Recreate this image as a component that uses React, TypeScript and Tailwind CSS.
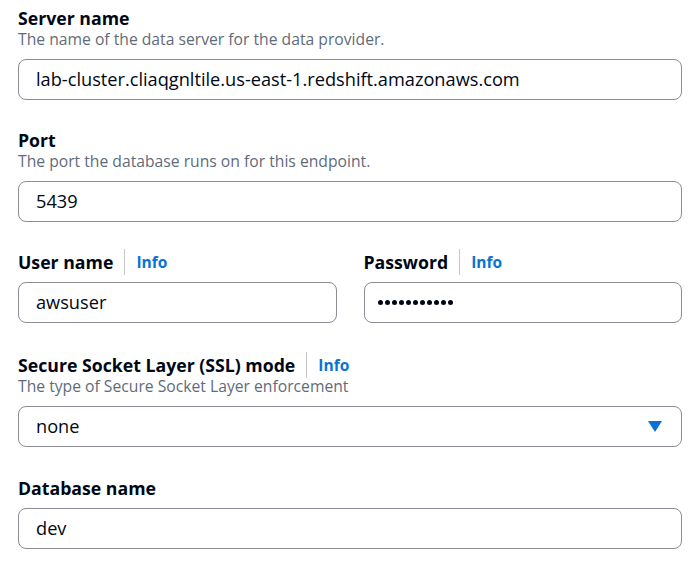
import { ReactNode } from "react"

function Label(props: { text: string; info?: boolean }) {
    return (
        <div className="flex items-center h-[22px]">
            <span className="text-[17.7px] font-bold text-[#000716] leading-[22px]">{props.text}</span>
            {props.info ? (
                <>
                    <span className="ml-[11px] mr-[11px] h-[26px] w-px bg-[#c6c6cd]"></span>
                    <a className="text-[15.5px] font-bold text-[#0972d3] leading-[22px]">Info</a>
                </>
            ) : null}
        </div>
    )
}

function Desc(props: { text: string }) {
    return <p className="text-[15.7px] text-[#5f6b7a] leading-[20px]">{props.text}</p>
}

function Box(props: { children: ReactNode }) {
    return (
        <div className="flex items-center h-[41px] rounded-[8px] border-[1.5px] border-[#8c8c94] bg-white pl-[17px] pr-[19px] text-[18.2px] text-[#000716]">
            {props.children}
        </div>
    )
}

function Dots(props: { count: number }) {
    let dots = []
    for (let i = 0; i < props.count; i++) {
        dots.push(<span key={i} className="w-[5px] h-[5px] rounded-full bg-[#000716]"></span>)
    }
    return <div className="flex gap-[2px] ml-[-4px]">{dots}</div>
}

export default function App() {
    return (
        <div className="w-[691px] h-[564px] bg-white pl-[18px] pr-[9px] pt-[7px]" style={{ fontFamily: '"Open Sans", "Noto Sans", sans-serif' }}>
            <div className="flex flex-col">
                <Label text="Server name" />
                <Desc text="The name of the data server for the data provider." />
                <div className="mt-[10px]">
                    <Box>lab-cluster.cliaqgnltile.us-east-1.redshift.amazonaws.com</Box>
                </div>
            </div>

            <div className="flex flex-col mt-[29px]">
                <Label text="Port" />
                <Desc text="The port the database runs on for this endpoint." />
                <div className="mt-[10px]">
                    <Box>5439</Box>
                </div>
            </div>

            <div className="grid grid-cols-2 gap-[27px] mt-[29px]">
                <div className="flex flex-col">
                    <Label text="User name" info />
                    <div className="mt-[9px]">
                        <Box>awsuser</Box>
                    </div>
                </div>
                <div className="flex flex-col">
                    <Label text="Password" info />
                    <div className="mt-[9px]">
                        <Box><Dots count={11} /></Box>
                    </div>
                </div>
            </div>

            <div className="flex flex-col mt-[31px]">
                <Label text="Secure Socket Layer (SSL) mode" info />
                <Desc text="The type of Secure Socket Layer enforcement" />
                <div className="mt-[10px]">
                    <Box>
                        <span className="flex-1">none</span>
                        <svg width="14" height="11" viewBox="0 0 14 11">
                            <path d="M0 0 H14 L7 11 Z" fill="#0972d3" />
                        </svg>
                    </Box>
                </div>
            </div>

            <div className="flex flex-col mt-[30px]">
                <Label text="Database name" />
                <div className="mt-[9px]">
                    <Box>dev</Box>
                </div>
            </div>
        </div>
    )
}
